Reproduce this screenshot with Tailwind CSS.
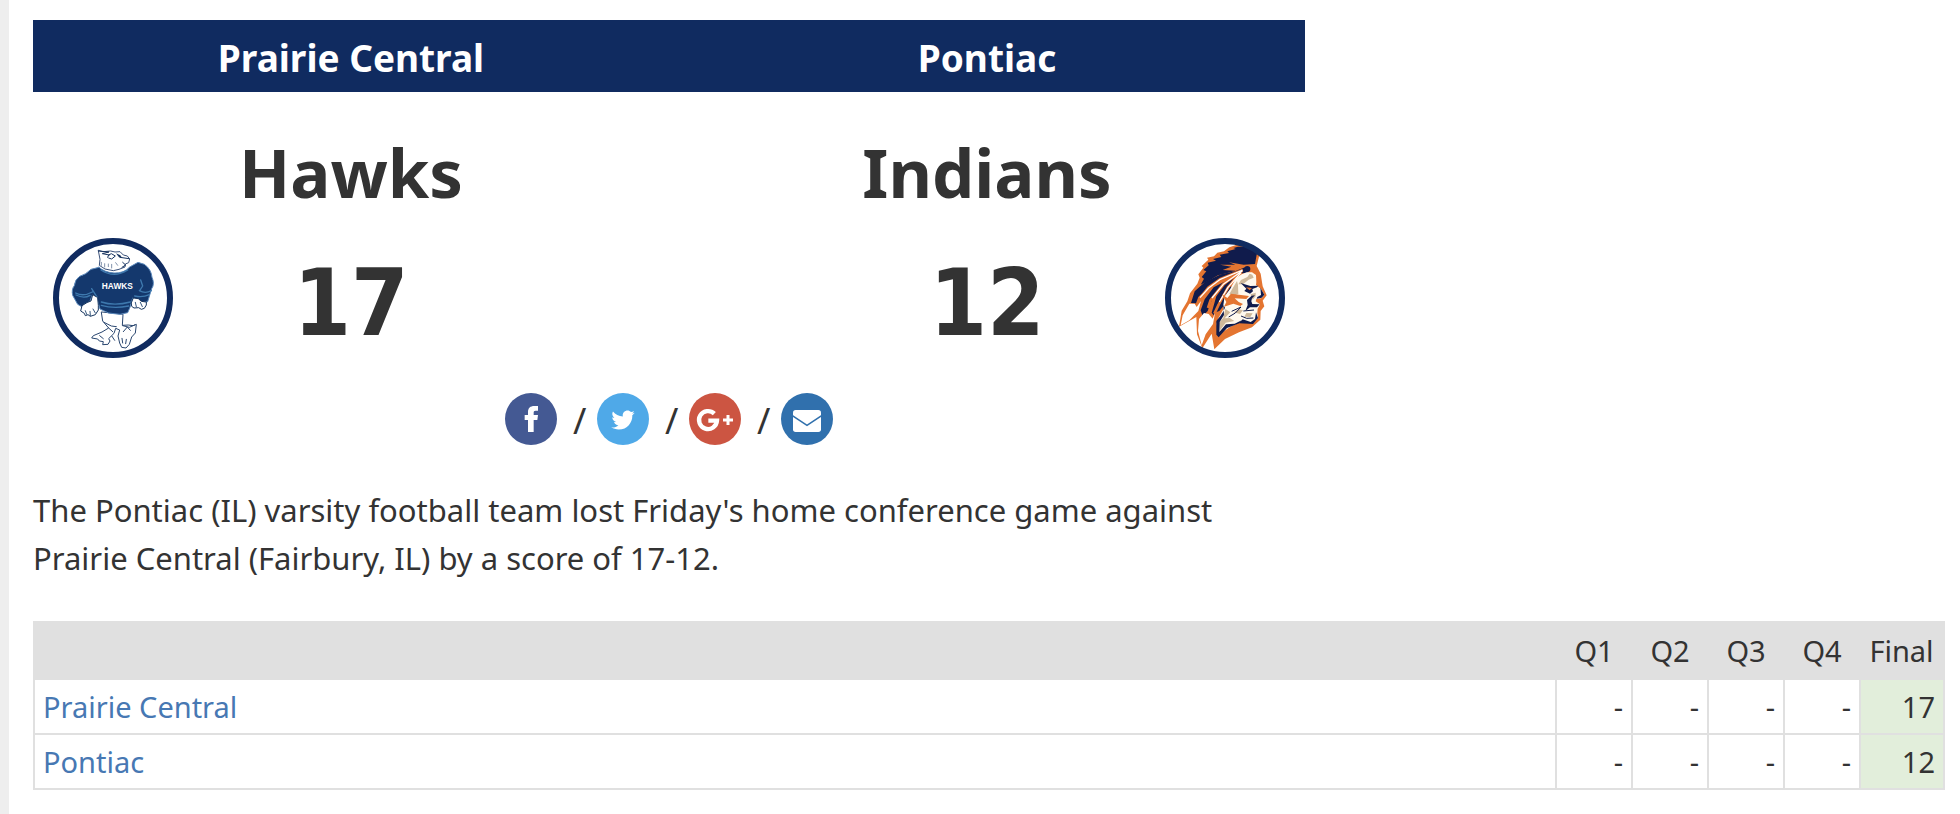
<!DOCTYPE html>
<html lang="en">
<head>
<meta charset="utf-8">
<meta name="viewport" content="width=device-width, initial-scale=1">
<title>Prairie Central 17, Pontiac 12</title>
<script src="https://cdn.jsdelivr.net/npm/@tailwindcss/browser@4"></script>
</head>
<body class="min-h-screen border-l-9 border-[#eeeeee] bg-white pt-5 pr-[15px] pb-6 pl-6 font-['Noto_Sans','DejaVu_Sans',sans-serif] text-[#333333]">
<main>
  <section class="max-w-[1272px]">
    <div class="grid grid-cols-2 bg-[#102b60] pt-1 text-center text-[37px]/[68px] font-bold text-white">
      <h2>Prairie Central</h2>
      <h2>Pontiac</h2>
    </div>
    <div class="grid grid-cols-2 pt-9 pb-1 text-center font-bold">
      <h3 class="text-[67px]/[88px]">Hawks</h3>
      <h3 class="text-[67px]/[88px]">Indians</h3>
    </div>
    <div class="grid grid-cols-2 pt-[18px]">
      <div class="grid grid-cols-[120px_1fr_120px] items-center px-5">
        <svg class="size-[120px]" viewBox="39 39 360 360" role="img" aria-label="Hawks logo">
          <circle cx="219" cy="219" r="171" fill="#fff" stroke="#102b60" stroke-width="18"/>
          <g stroke-linejoin="round" stroke-linecap="round">
            <path d="M184 262L188 288L206 309L186 321L160 332L155 339L173 342L178 348L190 350L188 359L204 358L210 348L206 341L222 325L227 310L239 315L234 333L239 354L245 367L258 369L268 358L275 336L286 324L289 298L279 302L265 300L247 301L249 269Z" fill="#fff" stroke="#29466f" stroke-width="3"/>
            <path d="M206 309L218 320M192 292L214 303L229 305M216 334L224 346M250 320L262 306L271 316M246 340L248 354M259 343L257 356M179 332L190 341M248 302L268 307L284 300" fill="none" stroke="#29466f" stroke-width="3"/>
            <path d="M177 127L153 133Q137 149 119 154Q105 163 103 182Q94 193 98 211L113 238L127 246L148 233L157 210L171 220L180 252L206 264L240 268L263 263L270 247L278 219L303 233L323 230L335 191Q345 177 336 157Q334 133 313 118L294 112L269 126Q253 145 222 144Q193 142 177 127Z" fill="#14386d" stroke="#5c8abd" stroke-width="3"/>
            <path d="M107 204Q130 216 157 201M108 210Q132 222 150 211M184 231Q223 244 271 231M184 241Q221 252 266 243M183 135Q222 161 263 135M302 165L308 183L299 197M298 197Q316 207 334 197M284 213Q308 218 328 209M155 191L172 218" fill="none" stroke="#3e79ae" stroke-width="4"/>
            <path d="M172 217L158 209L153 228Q143 230 126 242L122 258L133 265L136 272L144 269L151 274L166 269L175 255L175 242ZM281 219L295 221L304 229L319 231L319 240L313 250L304 253L296 248L282 249L275 244L274 235Z" fill="#fff" stroke="#17365f" stroke-width="3"/>
            <path d="M136 257L140 268M150 259L151 272M159 252L166 264M286 232L289 245M301 232L307 245" fill="none" stroke="#35577e" stroke-width="3"/>
            <path d="M175 77L180 103L178 121L195 132L220 137L237 133L255 126L256 117L266 113L269 102L262 93L250 90L240 80L225 81L212 78L190 80Z" fill="#fff" stroke="#3b527b" stroke-width="3"/>
            <path d="M175 78L207 81L187 86L208 90M203 97L206 90L214 86L226 93L215 102L206 99M240 97L267 101M248 112L257 120L246 127" fill="none" stroke="#18345f" stroke-width="3"/>
            <path d="M184 112V121M194 116V126M205 117V125M215 118V129M227 113L233 121" fill="none" stroke="#8292ab" stroke-width="3"/>
            <path d="M228 85L241 91L246 98L237 97Z" fill="#18345f"/>
          </g>
          <text x="232" y="191" text-anchor="middle" font-family="Liberation Sans, sans-serif" font-size="25" font-weight="700" fill="#fff">HAWKS</text>
        </svg>
        <p class="pt-3 text-center font-['DejaVu_Sans_Condensed','DejaVu_Sans',sans-serif] text-[92px]/[108px] font-bold">17</p>
      </div>
      <div class="grid grid-cols-[120px_1fr_120px] items-center px-5">
        <p class="col-start-2 pt-3 text-center font-['DejaVu_Sans_Condensed','DejaVu_Sans',sans-serif] text-[92px]/[108px] font-bold">12</p>
        <svg class="size-[120px]" viewBox="30 39 360 360" role="img" aria-label="Indians logo">
          <defs><clipPath id="crest"><circle cx="210" cy="219" r="165"/></clipPath></defs>
          <circle cx="210" cy="219" r="171" fill="#fff"/>
          <g clip-path="url(#crest)" stroke-linejoin="round">
            <path d="M250 58L223 67L207 79L187 83L177 94L156 98L160 104L140 123L145 128L130 148L134 158L127 176L105 205L97 229L80 257L72 305L124 276L126 328L142 370L170 326L178 373L210 342L252 322L291 307L316 284L317 258L328 244L323 227L335 211L323 184L317 146L305 123L312 95L330 75Z" fill="#e47531"/>
            <path d="M249 65L235 69L242 72L217 79L222 84L194 89L199 96L174 102L183 107L158 113L161 121L145 135L154 139L140 156L147 161L137 179L164 166L189 151L217 144L242 137L203 135L229 125L195 119L241 119L222 112L266 119L300 117L305 89L312 76L285 65Z" fill="#101b4c"/>
            <path d="M270 127L283 136L277 143L252 146L225 151L193 163L163 183L130 216L123 235L108 234L119 199L151 170L198 148L240 139Z" fill="#101b4c"/>
            <path d="M242 150L209 180L184 214L170 263L176 271L190 235L215 191ZM208 170L176 187L149 223L137 256L143 274L158 258L173 218ZM226 184L209 212L187 244L178 263L193 258L216 230L238 188Z" fill="#101b4c"/>
            <path d="M263 135L195 163L160 188L134 222M262 137L204 178L167 225L159 249M258 143L219 187L191 239L178 266" fill="none" stroke="#e47531" stroke-width="8"/>
            <path d="M263 135L196 163L161 189L135 218M262 137L205 178L171 219M258 143L219 187L193 231" fill="none" stroke="#fff" stroke-width="4"/>
            <path d="M103 236L119 236L125 246L138 228L130 258L103 286L77 301L83 271ZM147 264L161 267L173 281L180 264L174 297L152 328L140 361L129 318L132 282Z" fill="#fff"/>
            <path d="M185 296L190 280L205 253L205 240L209 214L226 191L243 159L260 148L275 142L291 142L303 150L304 172L303 180L318 192L328 209L320 219L304 222L302 229L315 238L308 251L307 265L309 278L292 294L255 291L225 306L190 330Z" fill="#fff9ee"/>
            <path d="M284 146L277 156L258 165L250 178L264 178L281 164L296 158L292 149ZM246 168L233 190L223 207L236 212L250 207L249 180ZM211 252L205 278L192 293L193 319L212 293L238 288L224 279L209 280L226 262ZM252 253L264 256L255 267L236 262ZM274 264L293 265L286 276L268 275ZM287 208L302 203L302 214L293 224L289 217Z" fill="#cfb99b"/>
            <path d="M257 174L286 183L310 182L306 187L292 192L294 199L285 206L268 198L274 191Z" fill="#101b4c"/>
            <path d="M316 188L328 209L320 218L305 221L307 216L318 210ZM276 225L290 212L300 211L291 220L289 229L292 237L314 238L306 247L285 247L271 258L278 240ZM205 240L210 248L204 261L196 273L184 288L184 329L191 337L216 309L253 295L294 297L309 279L303 262L300 282L287 291L263 283L248 300L260 286L239 296L213 298L193 321L194 291L207 270Z" fill="#101b4c"/>
            <path d="M201 208L217 219L228 206L282 213L274 222L239 220L251 231L264 237L256 243L235 236L207 245L214 231ZM273 187L291 189L284 196Z" fill="#e47531"/>
            <path d="M230 259L258 246L241 264L221 276M265 258L297 255M258 273L275 280L295 279" fill="none" stroke="#101b4c" stroke-width="3"/>
            <circle cx="277" cy="132" r="9" fill="#101b4c"/>
          </g>
          <circle cx="210" cy="219" r="171" fill="none" stroke="#102b60" stroke-width="18"/>
        </svg>
      </div>
    </div>
    <nav class="flex items-center justify-center gap-3 pt-[33px] text-4xl/[52px]" aria-label="Share">
      <a href="#facebook" aria-label="Share on Facebook"><svg class="size-[52px]" viewBox="0 0 156 156"><circle cx="78" cy="78" r="78" fill="#445993"/><path fill="#fff" d="M69 117V81H59V66H69V57C69 45 76 39 88 39H99V53H92C87 53 86 55 86 60V66H99L97 81H86V117Z"/></svg></a>
      <span class="w-4 pt-1 pl-1 text-center">/</span>
      <a href="#twitter" aria-label="Share on Twitter"><svg class="size-[52px]" viewBox="0 0 156 156"><circle cx="78" cy="78" r="78" fill="#4fa9e8"/><path fill="#fff" transform="translate(43 46) scale(.137)" d="M459.37 151.716c.325 4.548.325 9.097.325 13.645 0 138.72-105.583 298.558-298.558 298.558-59.452 0-114.68-17.219-161.137-47.106 8.447.974 16.568 1.299 25.34 1.299 49.055 0 94.213-16.568 130.274-44.832-46.132-.975-84.792-31.188-98.112-72.772 6.498.974 12.995 1.624 19.818 1.624 9.421 0 18.843-1.3 27.614-3.573-48.081-9.747-84.143-51.98-84.143-102.985v-1.299c13.969 7.797 30.214 12.67 47.431 13.319-28.264-18.843-46.781-51.005-46.781-87.391 0-19.492 5.197-37.36 14.294-52.954 51.655 63.675 129.3 105.258 216.365 109.807-1.624-7.797-2.599-15.918-2.599-24.04 0-57.828 46.782-104.934 104.934-104.934 30.213 0 57.502 12.67 76.67 33.137 23.715-4.548 46.456-13.32 66.599-25.34-7.798 24.366-24.366 44.833-46.132 57.827 21.117-2.273 41.584-8.122 60.426-16.243-14.292 20.791-32.161 39.308-52.628 54.253z"/></svg></a>
      <span class="w-4 pt-1 pl-1 text-center">/</span>
      <a href="#google-plus" aria-label="Share on Google Plus"><svg class="size-[52px]" viewBox="0 0 156 156"><circle cx="78" cy="78" r="78" fill="#cc5542"/><path d="M76 62A27 27 0 1 0 84 83H58" fill="none" stroke="#fff" stroke-width="13"/><path d="M102 81H132M117 66V96" stroke="#fff" stroke-width="9"/></svg></a>
      <span class="w-4 pt-1 pl-1 text-center">/</span>
      <a href="#email" aria-label="Share by email"><svg class="size-[52px]" viewBox="0 0 156 156"><circle cx="78" cy="78" r="78" fill="#3070ad"/><rect x="36" y="51" width="84" height="66" rx="8" fill="#fff"/><path d="M34 68L78 97L122 68" fill="none" stroke="#3070ad" stroke-width="5"/></svg></a>
    </nav>
    <p class="pt-[39px] text-[31px]/[48px]">The Pontiac (IL) varsity football team lost Friday's home conference game against Prairie Central (Fairbury, IL) by a score of 17-12.</p>
  </section>
  <table class="mt-[39px] w-full border-collapse border-2 border-[#e0e0e0] text-right text-[29px]/[36px]">
    <thead class="bg-[#e0e0e0]">
      <tr class="h-[57px] text-center">
        <td></td>
        <th scope="col" class="w-[76px] font-normal">Q1</th>
        <th scope="col" class="w-[76px] font-normal">Q2</th>
        <th scope="col" class="w-[76px] font-normal">Q3</th>
        <th scope="col" class="w-[76px] font-normal">Q4</th>
        <th scope="col" class="w-[84px] font-normal">Final</th>
      </tr>
    </thead>
    <tbody>
      <tr class="h-[55px]">
        <th scope="row" class="border-2 border-[#e0e0e0] px-2 text-left font-normal"><a href="#prairie-central" class="text-[#4778b3]">Prairie Central</a></th>
        <td class="border-2 border-[#e0e0e0] px-2">-</td>
        <td class="border-2 border-[#e0e0e0] px-2">-</td>
        <td class="border-2 border-[#e0e0e0] px-2">-</td>
        <td class="border-2 border-[#e0e0e0] px-2">-</td>
        <td class="border-2 border-[#e0e0e0] bg-[#e2eedb] px-2">17</td>
      </tr>
      <tr class="h-[55px]">
        <th scope="row" class="border-2 border-[#e0e0e0] px-2 text-left font-normal"><a href="#pontiac" class="text-[#4778b3]">Pontiac</a></th>
        <td class="border-2 border-[#e0e0e0] px-2">-</td>
        <td class="border-2 border-[#e0e0e0] px-2">-</td>
        <td class="border-2 border-[#e0e0e0] px-2">-</td>
        <td class="border-2 border-[#e0e0e0] px-2">-</td>
        <td class="border-2 border-[#e0e0e0] bg-[#e2eedb] px-2">12</td>
      </tr>
    </tbody>
  </table>
</main>
</body>
</html>
